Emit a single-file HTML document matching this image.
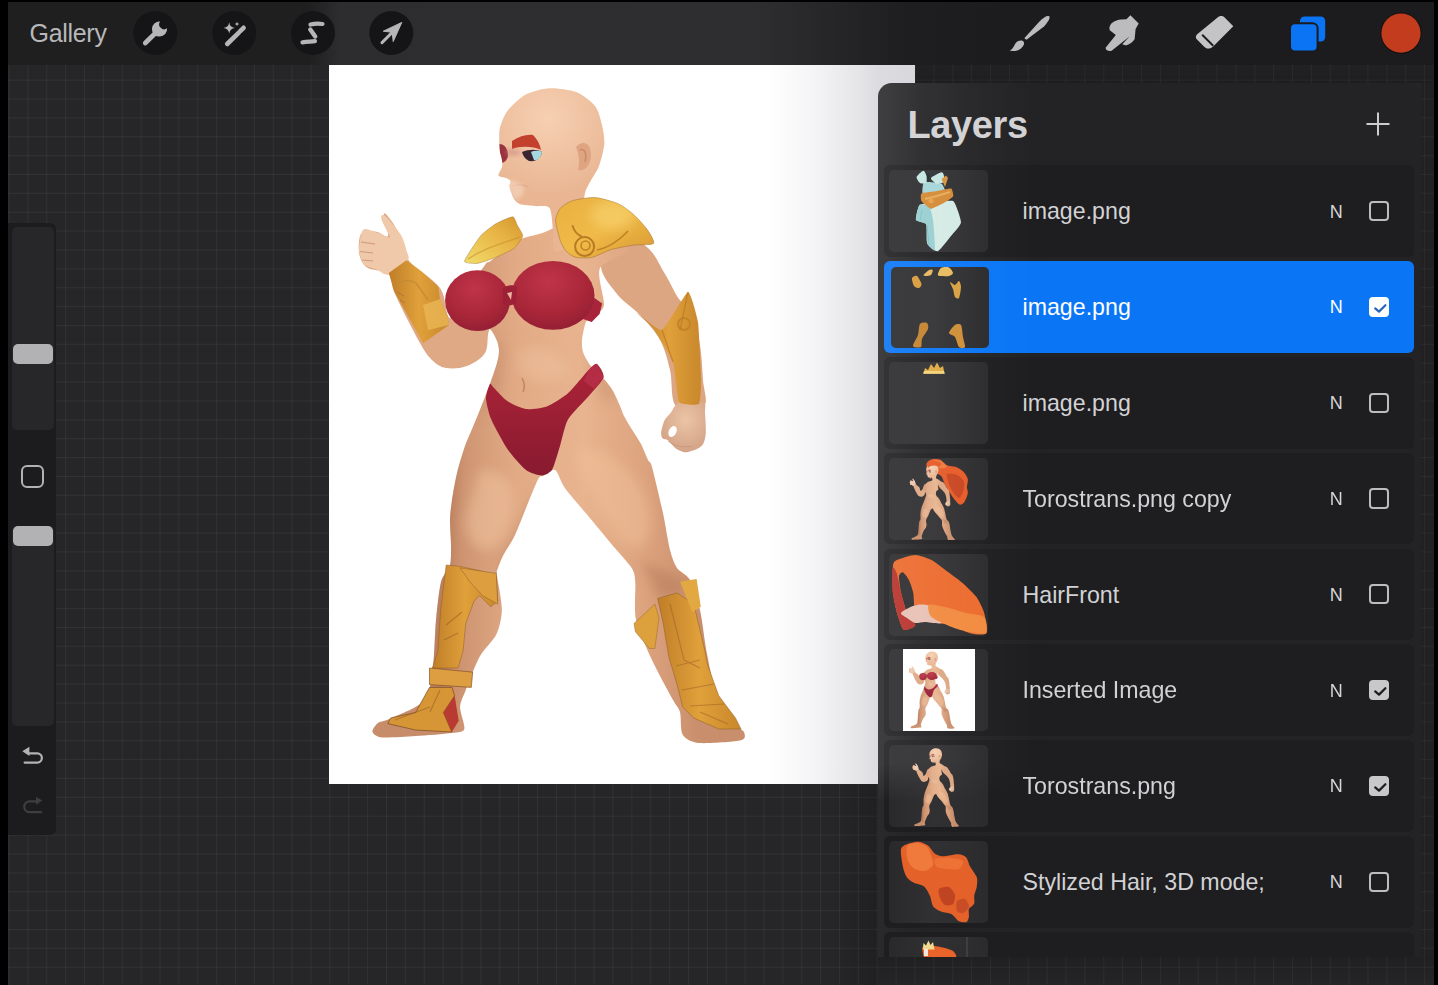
<!DOCTYPE html>
<html><head><meta charset="utf-8">
<style>
*{margin:0;padding:0;box-sizing:border-box}
html,body{width:1438px;height:985px;overflow:hidden;background:#000;font-family:"Liberation Sans",sans-serif}
.abs{position:absolute}
#bg{position:absolute;left:8px;top:2px;width:1426px;height:983px;background-color:#262628;
 background-image:linear-gradient(90deg,rgba(255,255,255,0.05) 1px,transparent 1px),linear-gradient(0deg,rgba(255,255,255,0.05) 1px,transparent 1px);
 background-size:18.885px 18.885px;background-position:0.5px 3.1px}
#toolbar{position:absolute;left:8px;top:2px;width:1426px;height:63px;
 background:linear-gradient(90deg,#1f1f1f 0,#1f1f20 300px,#2d2d2f 332px,#2e2e30 745px,#1e1e20 900px,#1c1b1e 1000px,#1c1b1e 100%)}
.tb{position:absolute;color:#b8b8ba;font-size:24px;line-height:24px}
.circ{position:absolute;width:44px;height:44px;border-radius:50%;background:#151517;top:11px}
.circ svg{position:absolute;left:0;top:0}
#canvas{position:absolute;left:329px;top:65px;width:586px;height:719px;overflow:hidden;
 background:linear-gradient(90deg,#fff 0,#fff 440px,#f3f3f5 490px,#e5e5e7 530px,#dcdce0 549px,#d8d8dc 586px)}
#side{position:absolute;left:8px;top:223px;width:48px;height:612px;background:#1c1c1e;border-radius:0 6px 6px 0}
.track{position:absolute;left:4px;width:42px;background:#272729;border-radius:5px}
.thumbk{position:absolute;left:5px;width:40px;height:20px;background:#b2b2b4;border-radius:5px}
#panel{position:absolute;left:878px;top:83px;width:543px;height:874px;border-radius:14px 10px 0 0;overflow:hidden;
 background:linear-gradient(90deg,#2a2a2c 0,#242426 40px,#232325 150px,#232325 100%)}
.row{position:absolute;left:6px;width:530px;height:91.6px;background:#1e1d20;border-radius:6px;overflow:hidden}
.row.sel{background:#0a76f6}
.th{position:absolute;left:5.3px;top:5px;width:99px;height:82px;border-radius:5px;overflow:hidden;
 background:linear-gradient(90deg,#29292b,#313133 45%,#2b2b2d)}
.th svg{position:absolute;left:0;top:0}
.row.sel .th{left:7px;top:6px;width:97.5px;height:81px}
.lt{position:absolute;left:138.5px;top:35px;font-size:23.2px;line-height:23px;color:#d2d2d4;white-space:nowrap}
.row.sel .lt{color:#fff}
.n{position:absolute;left:445.8px;top:37.2px;font-size:18px;line-height:18px;color:#d6d6d8}
.row.sel .n{color:#fff}
.cb{position:absolute;left:485px;top:35.5px;width:20.3px;height:20.3px;border:2.2px solid #bdbdbf;border-radius:4px}
.cb.on{background:#c8c8ca;border-color:#c8c8ca}
.cb.sel{background:#fff;border-color:#fff}
.cb svg{position:absolute;left:-2.2px;top:-2.2px}
</style></head><body>
<svg width="0" height="0" style="position:absolute"><defs>
<linearGradient id="gSkin" gradientUnits="userSpaceOnUse" x1="440" y1="0" x2="700" y2="0"><stop offset="0" stop-color="#c78c6a"/><stop offset="0.3" stop-color="#e2ab86"/><stop offset="0.55" stop-color="#e8b48f"/><stop offset="0.8" stop-color="#dca27e"/><stop offset="1" stop-color="#c98f6c"/></linearGradient>
<linearGradient id="gLegL" gradientUnits="userSpaceOnUse" x1="445" y1="0" x2="520" y2="0"><stop offset="0" stop-color="#c4896a"/><stop offset="0.5" stop-color="#e3ad88"/><stop offset="1" stop-color="#d39a77"/></linearGradient>
<radialGradient id="gHead" gradientUnits="userSpaceOnUse" cx="548" cy="118" r="80"><stop offset="0" stop-color="#f6d0b2"/><stop offset="1" stop-color="#e9b592"/></radialGradient>
<linearGradient id="gGold" x1="0" y1="0" x2="1" y2="1"><stop offset="0" stop-color="#e8b040"/><stop offset="0.5" stop-color="#f0ba48"/><stop offset="1" stop-color="#d89830"/></linearGradient>
<linearGradient id="gGoldS" x1="0" y1="1" x2="1" y2="0"><stop offset="0" stop-color="#f0dc6a"/><stop offset="0.6" stop-color="#e8b445"/><stop offset="1" stop-color="#d4962e"/></linearGradient>
<linearGradient id="gGoldD" x1="0" y1="0" x2="1" y2="0"><stop offset="0" stop-color="#bf7e28"/><stop offset="0.5" stop-color="#e0a03a"/><stop offset="1" stop-color="#c8882c"/></linearGradient>
<linearGradient id="gRedB" x1="0" y1="0" x2="0" y2="1"><stop offset="0" stop-color="#ac2438"/><stop offset="1" stop-color="#881a30"/></linearGradient>
<radialGradient id="gBoob" cx="0.45" cy="0.3" r="0.8"><stop offset="0" stop-color="#c03448"/><stop offset="0.6" stop-color="#a82638"/><stop offset="1" stop-color="#8c1c32"/></radialGradient>
<radialGradient id="gFist" cx="0.55" cy="0.35" r="0.75"><stop offset="0" stop-color="#ecc4a6"/><stop offset="1" stop-color="#cf9e82"/></radialGradient>
<clipPath id="headClip"><path d="M549.5 88.2 C556.2 87.9 569.9 89.6 576.0 92.0 C582.1 94.4 591.5 101.6 595.0 106.0 C598.5 110.4 600.8 119.9 602.0 125.0 C603.2 130.1 604.7 138.5 604.3 144.0 C603.9 149.5 600.9 160.9 599.0 166.0 C597.1 171.1 591.9 178.4 590.0 182.0 C588.1 185.6 585.8 189.5 585.0 193.0 C584.2 196.5 583.6 202.8 584.0 208.0 C584.4 213.2 591.7 226.1 588.0 232.0 C584.3 237.9 560.7 252.3 556.0 252.0 C551.3 251.7 553.9 235.9 553.0 230.0 C552.1 224.1 551.9 211.2 549.5 208.0 C547.1 204.8 538.7 206.6 534.8 206.1 C530.9 205.6 523.0 205.2 520.2 204.3 C517.4 203.4 515.2 200.6 514.0 199.0 C512.8 197.4 511.6 193.7 511.0 192.0 C510.4 190.3 509.6 187.5 509.5 186.0 C509.4 184.5 511.0 182.1 510.5 181.0 C510.0 179.9 507.6 178.7 506.0 178.0 C504.4 177.3 499.0 177.0 498.5 175.5 C498.0 174.0 501.5 169.1 502.0 167.0 C502.5 164.9 502.3 162.3 502.0 160.0 C501.7 157.7 499.9 152.7 499.5 150.0 C499.1 147.3 499.1 143.0 499.2 140.0 C499.3 137.0 498.9 131.4 500.0 127.5 C501.1 123.6 504.0 115.4 507.4 111.0 C510.8 106.6 520.1 97.6 525.7 94.6 C531.3 91.6 542.8 88.5 549.5 88.2Z"/></clipPath>
<clipPath id="paulClip"><path d="M555.6 220.6 C555.6 216.9 558.2 210.7 560.2 208.4 C562.2 206.1 568.3 202.0 572.4 200.7 C576.5 199.4 589.9 197.2 595.3 197.6 C600.7 198.0 613.8 201.8 618.3 203.8 C622.8 205.8 630.2 211.5 633.6 214.5 C637.0 217.5 645.1 226.4 647.4 229.8 C649.7 233.2 655.1 241.7 653.5 243.5 C651.9 245.3 638.6 244.4 633.6 245.1 C628.6 245.8 615.4 248.3 610.6 249.7 C605.8 251.1 596.4 256.4 592.3 257.3 C588.2 258.2 578.5 258.0 575.5 257.3 C572.5 256.6 568.1 253.2 566.3 251.2 C564.5 249.2 561.4 244.1 560.2 240.5 C559.0 236.9 555.6 224.3 555.6 220.6Z"/></clipPath>
<clipPath id="torsoClip"><path d="M545.0 232.0 C536.5 235.3 524.3 236.9 518.0 240.0 C511.7 243.1 503.1 250.7 498.0 255.0 C492.9 259.3 483.1 266.0 480.0 272.0 C476.9 278.0 475.0 293.6 475.0 300.0 C475.0 306.4 477.9 316.0 480.0 320.0 C482.1 324.0 488.7 327.2 491.0 330.0 C493.3 332.8 495.9 338.2 497.0 341.0 C498.1 343.8 499.0 348.1 499.0 351.0 C499.0 353.9 498.1 359.0 497.0 363.0 C495.9 367.0 492.6 376.5 491.0 381.0 C489.4 385.5 487.1 391.5 485.0 397.0 C482.9 402.5 477.7 415.5 475.0 422.0 C472.3 428.5 467.4 439.2 465.0 446.0 C462.6 452.8 458.7 465.8 457.0 473.0 C455.3 480.2 452.9 493.7 452.0 500.0 C451.1 506.3 450.1 514.0 450.0 520.0 C449.9 526.0 451.0 539.0 451.0 545.0 C451.0 551.0 451.3 560.1 450.0 565.0 C448.7 569.9 442.9 574.7 441.0 582.0 C439.1 589.3 437.1 608.8 436.0 620.0 C434.9 631.2 434.5 655.3 433.0 666.0 C431.5 676.7 430.5 693.1 425.0 700.0 C419.5 706.9 398.3 714.9 392.0 718.0 C385.7 721.1 380.6 721.1 378.0 723.0 C375.4 724.9 371.9 730.1 372.5 732.0 C373.1 733.9 376.6 737.0 382.3 737.5 C388.0 738.0 406.3 736.7 415.6 736.1 C424.9 735.5 445.3 733.9 451.8 733.0 C458.3 732.1 463.2 732.5 464.3 729.0 C465.4 725.5 459.9 712.1 460.1 706.9 C460.3 701.7 463.1 696.9 465.7 690.2 C468.3 683.5 475.5 664.2 479.6 656.8 C483.7 649.4 493.3 640.9 496.3 634.6 C499.3 628.3 501.8 617.4 501.9 609.5 C502.0 601.6 497.5 580.5 497.0 575.0 C496.5 569.5 497.1 570.7 498.0 568.0 C498.9 565.3 501.1 559.4 503.4 555.0 C505.7 550.6 511.7 542.1 515.0 535.0 C518.3 527.9 525.4 509.2 528.5 501.7 C531.6 494.2 536.5 481.8 538.5 478.4 C540.5 475.0 541.3 477.0 543.5 475.9 C545.7 474.8 552.3 468.3 555.2 470.0 C558.1 471.7 560.5 481.9 565.2 488.4 C569.9 494.9 583.6 510.4 590.3 518.4 C597.0 526.4 609.7 541.8 615.3 548.5 C620.9 555.2 629.3 563.9 632.0 568.5 C634.7 573.1 634.8 576.1 635.3 583.0 C635.8 589.9 633.8 609.7 636.0 620.0 C638.2 630.3 647.1 649.3 652.0 660.0 C656.9 670.7 669.3 693.1 673.0 700.0 C676.7 706.9 678.7 707.4 680.0 712.0 C681.3 716.6 680.1 730.6 682.7 734.7 C685.3 738.8 691.6 742.3 699.4 743.0 C707.2 743.7 735.1 741.8 741.0 740.3 C746.9 738.8 744.6 734.0 743.9 732.0 C743.2 730.0 739.5 729.3 736.0 725.0 C732.5 720.7 721.9 709.5 718.0 700.0 C714.1 690.5 709.4 666.0 707.0 654.0 C704.6 642.0 702.3 619.9 700.0 610.0 C697.7 600.1 693.1 585.6 690.0 580.0 C686.9 574.4 679.7 572.0 677.0 568.0 C674.3 564.0 671.9 557.3 670.0 550.0 C668.1 542.7 665.4 524.1 663.0 513.0 C660.6 501.9 654.0 474.1 652.0 467.0 C650.0 459.9 649.5 463.1 648.0 460.0 C646.5 456.9 643.3 448.3 641.0 444.0 C638.7 439.7 633.3 431.7 631.0 428.0 C628.7 424.3 625.5 418.9 624.0 416.0 C622.5 413.1 621.5 409.3 620.0 406.0 C618.5 402.7 615.1 394.6 613.0 391.0 C610.9 387.4 606.5 381.8 604.0 379.0 C601.5 376.2 596.1 372.3 594.0 370.0 C591.9 367.7 589.5 364.4 588.0 362.0 C586.5 359.6 583.8 354.9 583.0 352.0 C582.2 349.1 581.6 344.0 582.0 340.0 C582.4 336.0 584.4 325.2 586.0 322.0 C587.6 318.8 591.6 318.3 594.0 316.0 C596.4 313.7 603.2 311.4 604.0 305.0 C604.8 298.6 596.5 275.6 600.0 268.0 C603.5 260.4 630.0 254.4 630.0 248.0 C630.0 241.6 606.4 224.4 600.0 220.0 C593.6 215.6 589.3 213.4 582.0 215.0 C574.7 216.6 553.5 228.7 545.0 232.0Z"/></clipPath>
<filter id="blur2" x="-30%" y="-30%" width="160%" height="160%"><feGaussianBlur stdDeviation="2"/></filter>
<filter id="blur6" x="-20%" y="-20%" width="140%" height="140%"><feGaussianBlur stdDeviation="6"/></filter>
<g id="fBody">
 <path d="M384.0 214.0 C384.3 211.2 387.8 216.3 390.0 219.0 C392.2 221.7 394.5 225.3 397.0 230.0 C399.5 234.7 402.8 241.7 405.0 247.0 C407.2 252.3 404.2 255.2 410.0 262.0 C415.8 268.8 433.3 278.7 440.0 288.0 C446.7 297.3 445.0 316.0 450.0 318.0 C455.0 320.0 463.7 309.3 470.0 300.0 C476.3 290.7 483.0 262.0 488.0 262.0 C493.0 262.0 499.8 288.7 500.0 300.0 C500.2 311.3 491.5 321.2 489.0 330.0 C486.5 338.8 488.7 347.0 485.0 353.0 C481.3 359.0 473.5 363.5 467.0 366.0 C460.5 368.5 451.8 369.0 446.0 368.0 C440.2 367.0 436.3 364.2 432.0 360.0 C427.7 355.8 426.2 354.0 420.0 343.0 C413.8 332.0 400.2 305.5 395.0 294.0 C389.8 282.5 393.5 278.3 389.0 274.0 C384.5 269.7 372.8 270.8 368.0 268.0 C363.2 265.2 361.5 261.3 360.0 257.0 C358.5 252.7 358.5 246.2 359.0 242.0 C359.5 237.8 360.0 233.7 363.0 232.0 C366.0 230.3 372.8 231.3 377.0 232.0 C381.2 232.7 386.8 239.0 388.0 236.0 C389.2 233.0 383.7 216.8 384.0 214.0Z" fill="#dfa985"/>
 <path d="M384.3 215.2 C386.5 216.5 391.3 222.3 394.2 225.9 C397.1 229.5 399.8 232.5 401.8 236.6 C403.8 240.7 405.4 246.2 406.4 250.3 C407.3 254.4 410.3 256.9 407.5 261.0 C404.7 265.1 394.9 273.2 389.6 274.6 C384.3 276.0 380.0 270.8 375.9 269.3 C371.8 267.8 367.5 266.9 365.2 265.5 C362.9 264.1 363.2 263.3 362.2 261.0 C361.2 258.7 359.5 255.1 359.1 251.8 C358.7 248.5 359.5 244.2 359.9 241.1 C360.3 238.0 360.5 235.5 361.4 233.5 C362.3 231.5 362.5 229.0 365.2 228.9 C367.9 228.8 373.3 231.4 377.4 232.8 C381.5 234.2 388.1 237.7 389.6 237.3 C391.1 236.9 388.0 233.7 386.6 230.5 C385.2 227.3 381.6 220.9 381.2 218.3 C380.8 215.8 382.1 213.9 384.3 215.2Z" fill="#f0c8aa"/>
 <path d="M361 242 L375 244 M360 251.5 L373 253 M362.5 260 L373 261" stroke="#d09a7c" stroke-width="1.2" fill="none"/>
 <path d="M622.0 238.0 C629.8 235.2 640.8 242.0 648.0 248.0 C655.2 254.0 659.8 265.5 665.0 274.0 C670.2 282.5 674.5 292.7 679.0 299.0 C683.5 305.3 688.5 304.3 692.0 312.0 C695.5 319.7 698.2 333.7 700.0 345.0 C701.8 356.3 702.3 369.8 703.0 380.0 C703.7 390.2 708.5 401.7 704.0 406.0 C699.5 410.3 681.7 412.0 676.0 406.0 C670.3 400.0 672.7 381.0 670.0 370.0 C667.3 359.0 665.0 349.2 660.0 340.0 C655.0 330.8 647.2 322.7 640.0 315.0 C632.8 307.3 623.5 302.3 617.0 294.0 C610.5 285.7 600.2 274.3 601.0 265.0 C601.8 255.7 614.2 240.8 622.0 238.0Z" fill="#dda682"/>
 <path d="M679.0 402.7 C683.3 401.4 699.9 401.4 703.4 402.7 C706.9 404.0 704.7 408.5 705.0 412.5 C705.3 416.5 706.0 428.7 705.8 432.8 C705.6 436.9 704.6 441.2 703.4 443.4 C702.2 445.6 699.3 447.8 696.9 449.0 C694.5 450.2 688.2 452.3 685.5 452.3 C682.8 452.3 678.5 450.2 676.6 449.0 C674.7 447.8 672.1 444.6 670.9 443.4 C669.7 442.2 668.7 440.7 667.6 440.0 C666.5 439.3 663.6 439.5 662.7 438.5 C661.8 437.5 660.9 435.2 661.1 432.8 C661.3 430.4 663.1 423.3 664.4 420.6 C665.7 417.9 669.0 414.9 670.9 412.5 C672.8 410.1 674.7 404.0 679.0 402.7Z" fill="url(#gFist)"/>
 <ellipse cx="672.6" cy="431.5" rx="3.8" ry="5.8" transform="rotate(25 672.6 431.5)" fill="#fff"/>
 <path d="M668 441 C674 446 684 448 692 446" stroke="#c09078" stroke-width="1" fill="none" opacity="0.6"/>
 <path d="M545.0 232.0 C536.5 235.3 524.3 236.9 518.0 240.0 C511.7 243.1 503.1 250.7 498.0 255.0 C492.9 259.3 483.1 266.0 480.0 272.0 C476.9 278.0 475.0 293.6 475.0 300.0 C475.0 306.4 477.9 316.0 480.0 320.0 C482.1 324.0 488.7 327.2 491.0 330.0 C493.3 332.8 495.9 338.2 497.0 341.0 C498.1 343.8 499.0 348.1 499.0 351.0 C499.0 353.9 498.1 359.0 497.0 363.0 C495.9 367.0 492.6 376.5 491.0 381.0 C489.4 385.5 487.1 391.5 485.0 397.0 C482.9 402.5 477.7 415.5 475.0 422.0 C472.3 428.5 467.4 439.2 465.0 446.0 C462.6 452.8 458.7 465.8 457.0 473.0 C455.3 480.2 452.9 493.7 452.0 500.0 C451.1 506.3 450.1 514.0 450.0 520.0 C449.9 526.0 451.0 539.0 451.0 545.0 C451.0 551.0 451.3 560.1 450.0 565.0 C448.7 569.9 442.9 574.7 441.0 582.0 C439.1 589.3 437.1 608.8 436.0 620.0 C434.9 631.2 434.5 655.3 433.0 666.0 C431.5 676.7 430.5 693.1 425.0 700.0 C419.5 706.9 398.3 714.9 392.0 718.0 C385.7 721.1 380.6 721.1 378.0 723.0 C375.4 724.9 371.9 730.1 372.5 732.0 C373.1 733.9 376.6 737.0 382.3 737.5 C388.0 738.0 406.3 736.7 415.6 736.1 C424.9 735.5 445.3 733.9 451.8 733.0 C458.3 732.1 463.2 732.5 464.3 729.0 C465.4 725.5 459.9 712.1 460.1 706.9 C460.3 701.7 463.1 696.9 465.7 690.2 C468.3 683.5 475.5 664.2 479.6 656.8 C483.7 649.4 493.3 640.9 496.3 634.6 C499.3 628.3 501.8 617.4 501.9 609.5 C502.0 601.6 497.5 580.5 497.0 575.0 C496.5 569.5 497.1 570.7 498.0 568.0 C498.9 565.3 501.1 559.4 503.4 555.0 C505.7 550.6 511.7 542.1 515.0 535.0 C518.3 527.9 525.4 509.2 528.5 501.7 C531.6 494.2 536.5 481.8 538.5 478.4 C540.5 475.0 541.3 477.0 543.5 475.9 C545.7 474.8 552.3 468.3 555.2 470.0 C558.1 471.7 560.5 481.9 565.2 488.4 C569.9 494.9 583.6 510.4 590.3 518.4 C597.0 526.4 609.7 541.8 615.3 548.5 C620.9 555.2 629.3 563.9 632.0 568.5 C634.7 573.1 634.8 576.1 635.3 583.0 C635.8 589.9 633.8 609.7 636.0 620.0 C638.2 630.3 647.1 649.3 652.0 660.0 C656.9 670.7 669.3 693.1 673.0 700.0 C676.7 706.9 678.7 707.4 680.0 712.0 C681.3 716.6 680.1 730.6 682.7 734.7 C685.3 738.8 691.6 742.3 699.4 743.0 C707.2 743.7 735.1 741.8 741.0 740.3 C746.9 738.8 744.6 734.0 743.9 732.0 C743.2 730.0 739.5 729.3 736.0 725.0 C732.5 720.7 721.9 709.5 718.0 700.0 C714.1 690.5 709.4 666.0 707.0 654.0 C704.6 642.0 702.3 619.9 700.0 610.0 C697.7 600.1 693.1 585.6 690.0 580.0 C686.9 574.4 679.7 572.0 677.0 568.0 C674.3 564.0 671.9 557.3 670.0 550.0 C668.1 542.7 665.4 524.1 663.0 513.0 C660.6 501.9 654.0 474.1 652.0 467.0 C650.0 459.9 649.5 463.1 648.0 460.0 C646.5 456.9 643.3 448.3 641.0 444.0 C638.7 439.7 633.3 431.7 631.0 428.0 C628.7 424.3 625.5 418.9 624.0 416.0 C622.5 413.1 621.5 409.3 620.0 406.0 C618.5 402.7 615.1 394.6 613.0 391.0 C610.9 387.4 606.5 381.8 604.0 379.0 C601.5 376.2 596.1 372.3 594.0 370.0 C591.9 367.7 589.5 364.4 588.0 362.0 C586.5 359.6 583.8 354.9 583.0 352.0 C582.2 349.1 581.6 344.0 582.0 340.0 C582.4 336.0 584.4 325.2 586.0 322.0 C587.6 318.8 591.6 318.3 594.0 316.0 C596.4 313.7 603.2 311.4 604.0 305.0 C604.8 298.6 596.5 275.6 600.0 268.0 C603.5 260.4 630.0 254.4 630.0 248.0 C630.0 241.6 606.4 224.4 600.0 220.0 C593.6 215.6 589.3 213.4 582.0 215.0 C574.7 216.6 553.5 228.7 545.0 232.0Z" fill="url(#gSkin)"/>
 <g clip-path="url(#torsoClip)" filter="url(#blur6)">
  <path d="M440 450 L458 450 L452 560 L446 700 L430 700Z" fill="#a86a4a" opacity="0.45"/>
  <path d="M500 560 L520 520 L545 476 L525 540 L505 600Z" fill="#b07656" opacity="0.35"/>
  <path d="M480 470 C500 470 520 480 510 520 C500 560 470 560 465 520Z" fill="#f2c6a2" opacity="0.5"/>
  <path d="M575 450 C600 440 640 470 650 510 C655 540 640 560 620 540 C600 510 580 480 575 450Z" fill="#f0c09a" opacity="0.5"/>
  <path d="M640 560 C660 570 680 575 690 590 L660 600Z" fill="#a86e50" opacity="0.4"/>
  <path d="M490 340 L505 345 L500 390 L480 420Z" fill="#b98060" opacity="0.35"/>
  <path d="M585 340 L600 350 L620 400 L600 400Z" fill="#b98060" opacity="0.3"/>
  <path d="M520 350 C540 345 560 350 570 370 C560 385 530 385 520 370Z" fill="#f0c4a2" opacity="0.45"/>
 </g>
 <path d="M522 378 C524 382 525 388 523 392" stroke="#b07a5c" stroke-width="1.6" fill="none" opacity="0.7"/>
 <path d="M549.5 88.2 C556.2 87.9 569.9 89.6 576.0 92.0 C582.1 94.4 591.5 101.6 595.0 106.0 C598.5 110.4 600.8 119.9 602.0 125.0 C603.2 130.1 604.7 138.5 604.3 144.0 C603.9 149.5 600.9 160.9 599.0 166.0 C597.1 171.1 591.9 178.4 590.0 182.0 C588.1 185.6 585.8 189.5 585.0 193.0 C584.2 196.5 583.6 202.8 584.0 208.0 C584.4 213.2 591.7 226.1 588.0 232.0 C584.3 237.9 560.7 252.3 556.0 252.0 C551.3 251.7 553.9 235.9 553.0 230.0 C552.1 224.1 551.9 211.2 549.5 208.0 C547.1 204.8 538.7 206.6 534.8 206.1 C530.9 205.6 523.0 205.2 520.2 204.3 C517.4 203.4 515.2 200.6 514.0 199.0 C512.8 197.4 511.6 193.7 511.0 192.0 C510.4 190.3 509.6 187.5 509.5 186.0 C509.4 184.5 511.0 182.1 510.5 181.0 C510.0 179.9 507.6 178.7 506.0 178.0 C504.4 177.3 499.0 177.0 498.5 175.5 C498.0 174.0 501.5 169.1 502.0 167.0 C502.5 164.9 502.3 162.3 502.0 160.0 C501.7 157.7 499.9 152.7 499.5 150.0 C499.1 147.3 499.1 143.0 499.2 140.0 C499.3 137.0 498.9 131.4 500.0 127.5 C501.1 123.6 504.0 115.4 507.4 111.0 C510.8 106.6 520.1 97.6 525.7 94.6 C531.3 91.6 542.8 88.5 549.5 88.2Z" fill="url(#gHead)"/>
 <g clip-path="url(#headClip)">
 <path d="M576 147 C583 139 592 143 591 157 C590 166 584 172 578 170 C580 162 579 154 576 147Z" fill="#dfa482"/>
 <path d="M580 150 C585 148 587 154 585 162" stroke="#c88a6a" stroke-width="1.5" fill="none"/>
 <path d="M512 141 C520 136 527 134 533 135 C537 139 540 144 541 150 C533 146 520 146 512 149Z" fill="#c4402e"/>
 <path d="M499.5 144 C504 144 508 148 508 156 C507 160 505 162 502 163 C500 156 499.5 150 499.5 144Z" fill="#8e2434" opacity="0.9"/>
 <path d="M506 150 C512 148 518 149 522 153 C518 156 512 156 506 155Z" fill="#c8807a" opacity="0.5" filter="url(#blur2)"/>
 <path d="M522 152 C529 149 537 149 542 152 C541 158 536 162 529 161 C525 159 523 156 522 152Z" fill="#3a2630"/>
 <path d="M531 152 C536 150 540 151 542 152 C541 157 538 161 534 160Z" fill="#a6d9df"/>
 <path d="M512 186 C518 184 524 185 528 187" stroke="#d4a088" stroke-width="1.2" fill="none" opacity="0.7"/>
 <path d="M505 180 C512 179 520 182 524 188 C524 196 520 200 513 199 L507 186Z" fill="#f8dcc8" opacity="0.55" filter="url(#blur2)"/>
 </g>
</g>
<g id="fBikini">
 <path d="M490.0 384.0 C489.1 385.2 485.8 394.3 486.0 398.5 C486.2 402.7 488.8 413.7 491.3 419.6 C493.8 425.5 503.2 442.8 507.2 448.7 C511.2 454.6 521.7 466.7 525.7 469.8 C529.7 472.9 538.4 475.5 541.5 475.5 C544.6 475.5 549.8 473.2 552.0 469.8 C554.2 466.4 558.1 451.9 560.0 446.0 C561.9 440.1 564.6 425.5 568.0 419.6 C571.4 413.7 584.8 400.7 589.0 395.8 C593.2 390.9 602.7 381.0 603.6 377.3 C604.5 373.6 598.7 364.9 597.0 364.0 C595.3 363.1 592.4 366.0 589.0 369.4 C585.6 372.8 572.9 388.9 568.0 393.2 C563.1 397.5 551.7 404.6 546.8 406.4 C541.9 408.2 530.3 409.6 525.7 409.0 C521.1 408.4 510.9 403.4 507.2 401.0 C503.5 398.6 496.0 390.0 494.0 388.0 C492.0 386.0 490.9 382.8 490.0 384.0Z" fill="url(#gRedB)"/>
 <path d="M589.0 369.4 L597.0 364.0 L603.6 377.3 L594.0 389.0 L584.0 381.0Z" fill="#b83048" opacity="0.8"/>
 <path d="M586.0 292.0 L602.2 303.4 L599.6 314.0 L591.7 321.9 L580.0 318.0Z" fill="#a8243a"/>
 <ellipse cx="553" cy="295.4" rx="41.5" ry="34.4" fill="url(#gBoob)"/>
 <ellipse cx="477.5" cy="300.7" rx="32.4" ry="30.4" fill="url(#gBoob)"/>
 <path d="M503 288 C507 285 513 284 517 287 L516 303 C512 306 507 306 503 304Z" fill="#9e2036"/>
 <path d="M507 293 L512 292 L511 300 Z" fill="#e8b8a0"/>
</g>
<g id="fArmor">
 <path d="M464.5 261.1 C464.8 258.8 478.0 239.0 480.6 235.9 C483.2 232.8 493.2 225.3 495.9 223.7 C498.6 222.1 510.9 216.7 512.7 216.8 C514.5 216.9 516.5 223.6 517.3 225.2 C518.1 226.8 523.0 234.0 522.7 235.9 C522.5 237.8 516.5 246.3 514.3 248.1 C512.1 249.9 499.0 256.0 495.9 257.3 C492.8 258.6 480.1 263.1 477.5 263.4 C474.9 263.7 464.2 263.4 464.5 261.1Z" fill="url(#gGoldS)" stroke="#9a6a20" stroke-width="0.8" stroke-opacity="0.5"/>
 <path d="M468 259 C485 248 500 244 520 237" stroke="#c89030" stroke-width="1.4" fill="none" opacity="0.6"/>
 <path d="M555.6 220.6 C555.6 216.9 558.2 210.7 560.2 208.4 C562.2 206.1 568.3 202.0 572.4 200.7 C576.5 199.4 589.9 197.2 595.3 197.6 C600.7 198.0 613.8 201.8 618.3 203.8 C622.8 205.8 630.2 211.5 633.6 214.5 C637.0 217.5 645.1 226.4 647.4 229.8 C649.7 233.2 655.1 241.7 653.5 243.5 C651.9 245.3 638.6 244.4 633.6 245.1 C628.6 245.8 615.4 248.3 610.6 249.7 C605.8 251.1 596.4 256.4 592.3 257.3 C588.2 258.2 578.5 258.0 575.5 257.3 C572.5 256.6 568.1 253.2 566.3 251.2 C564.5 249.2 561.4 244.1 560.2 240.5 C559.0 236.9 555.6 224.3 555.6 220.6Z" fill="url(#gGold)" stroke="#8a5a20" stroke-width="0.8" stroke-opacity="0.5"/>
 <g clip-path="url(#paulClip)"><ellipse cx="612" cy="215" rx="22" ry="14" fill="#f8d878" opacity="0.55" filter="url(#blur6)"/></g>
 <circle cx="584.6" cy="246.6" r="9.5" fill="none" stroke="#b87a22" stroke-width="2"/>
 <circle cx="585.5" cy="245.5" r="4.5" fill="none" stroke="#c08428" stroke-width="1.6"/>
 <path d="M572.4 225.2 C574 231 578 235 582 236.5" stroke="#b87a22" stroke-width="1.8" fill="none"/>
 <path d="M597 250 C608 248 620 240 628 231" stroke="#c08428" stroke-width="1.6" fill="none"/>
 <path d="M388.8 273.1 L406.4 260.2 L421.6 271.6 L438.4 286.8 L439.9 299.0 L447.5 315.8 L449.0 324.9 L423.1 343.2 L407.9 315.8 L394.2 291.4Z" fill="url(#gGoldD)"/>
 <path d="M395 285 C402 280 410 279 416 283 L428 300" stroke="#c08a34" stroke-width="1.4" fill="none" opacity="0.8"/>
 <path d="M423.0 305.0 L440.0 299.0 L447.5 315.8 L449.0 324.9 L428.0 330.0Z" fill="#eab656" opacity="0.8"/>
 <path d="M397 292 L404 296 M400 300 L405 303" stroke="#9a6a40" stroke-width="1" opacity="0.6"/>
 <path d="M637.0 313.0 C637.6 313.1 658.6 331.4 662.0 330.0 C665.4 328.6 685.6 292.5 688.0 292.0 C690.4 291.5 697.1 316.2 698.0 322.0 C698.9 327.8 700.9 373.5 701.0 379.0 C701.1 384.5 700.5 402.5 699.0 404.0 C697.5 405.5 680.7 404.8 679.0 402.0 C677.3 399.2 674.7 366.9 673.0 362.0 C671.3 357.1 655.4 331.3 653.0 328.0 C650.6 324.7 636.4 312.9 637.0 313.0Z" fill="url(#gGoldD)"/>
 <circle cx="684" cy="324" r="6" fill="none" stroke="#c28226" stroke-width="1.8"/>
 <path d="M662 330 L673 362 M688 292 L680 330" stroke="#b87a24" stroke-width="1.3" opacity="0.7"/>
 <path d="M446.2 565.0 L460.0 566.4 L479.6 570.6 L496.3 576.2 L497.7 601.2 L490.7 606.8 L479.6 595.6 L474.0 601.2 L465.7 623.4 L463.0 651.3 L458.0 668.0 L432.3 668.0 L437.9 651.3 L440.7 609.5Z" fill="url(#gGoldD)" stroke="#8a5a24" stroke-width="0.8" stroke-opacity="0.6"/>
 <path d="M460.0 567.8 L496.3 573.4 L497.7 604.0 L482.4 595.6 L470.0 582.0Z" fill="#dc9e3e" stroke="#8a5a24" stroke-width="0.8" stroke-opacity="0.6"/>
 <path d="M429.5 687.4 L452.0 687.4 L454.6 695.8 L443.4 712.5 L451.8 732.0 L415.6 730.0 L387.8 723.6 L390.6 718.0 L415.6 712.5Z" fill="#d69636" stroke="#7a4a20" stroke-width="1" stroke-opacity="0.7"/>
 <path d="M443.4 712.5 L454.6 695.8 L458.7 720.8 L451.8 732.0Z" fill="#b83a30"/>
 <path d="M429.5 668.0 L472.7 672.1 L471.3 687.4 L429.5 684.6Z" fill="#dc9e40" stroke="#7a4a20" stroke-width="0.9" stroke-opacity="0.7"/>
 <path d="M446 625 L462 612 M444 640 L458 633 M395 720 L430 707 M440 690 L430 712" stroke="#9a6226" stroke-width="1.2" fill="none" opacity="0.6"/>
 <path d="M657.6 598.4 L677.1 592.9 L693.8 604.0 L705.0 651.3 L707.7 665.2 L718.8 695.8 L735.5 718.0 L741.0 729.0 L718.8 729.0 L693.8 718.0 L682.7 706.9 L677.1 684.6 L668.8 656.8 L663.2 623.4Z" fill="url(#gGoldD)" stroke="#8a5a24" stroke-width="0.8" stroke-opacity="0.6"/>
 <path d="M680.0 581.7 L696.6 579.0 L700.8 606.8 L692.4 612.3Z" fill="#e2a842"/>
 <path d="M634.0 623.4 L654.9 604.0 L659.0 617.9 L654.9 648.5 L649.3 648.5 L635.4 631.8Z" fill="#dca03c" stroke="#8a5a24" stroke-width="0.8" stroke-opacity="0.5"/>
 <path d="M670 604 L684 660 L700 668 M676 666 L700 660 M682 690 L714 684 M690 706 L724 704 M700 712 L728 724" stroke="#9a6226" stroke-width="1.1" fill="none" opacity="0.55"/>
</g>
</defs></svg>
<div id="bg"></div>
<div id="canvas">
<svg width="586" height="719" viewBox="329 65 586 719" style="position:absolute;left:0;top:0"><use href="#fBody"/><use href="#fBikini"/><use href="#fArmor"/></svg>
</div>
<div style="position:absolute;left:915px;top:65px;width:519px;height:18px;background:linear-gradient(180deg,rgba(0,0,0,0.12),rgba(0,0,0,0.22))"></div>
<div style="position:absolute;left:878px;top:957px;width:556px;height:28px;background:linear-gradient(180deg,rgba(0,0,0,0.16),rgba(0,0,0,0.04))"></div>
<div style="position:absolute;left:1421px;top:83px;width:13px;height:874px;background:rgba(0,0,0,0.12)"></div>
<div style="position:absolute;left:830px;top:784px;width:48px;height:201px;background:linear-gradient(90deg,rgba(0,0,0,0),rgba(0,0,0,0.16))"></div>
<div id="toolbar"></div>
<div class="tb" style="left:29.5px;top:20.9px;font-size:25px;line-height:25px;letter-spacing:-0.3px">Gallery</div>
<svg width="1438" height="66" style="position:absolute;left:0;top:0">
<circle cx="155.3" cy="33" r="22" fill="#151517"/>
<circle cx="234.3" cy="33" r="22" fill="#151517"/>
<circle cx="313" cy="33" r="22" fill="#151517"/>
<circle cx="391.3" cy="33" r="22" fill="#151517"/>
<path d="M145.3 43 L155 33.5" stroke="#b6b6b8" stroke-width="4.8" stroke-linecap="round"/>
<path d="M160.04 21.42 A7.6 7.6 0 1 0 167.07 28.30 A5.0 5.0 0 0 1 160.04 21.42Z" fill="#b6b6b8"/>
<path d="M227.2 44 L238.6 32.8" stroke="#b6b6b8" stroke-width="4.6" stroke-linecap="round"/>
<path d="M240.2 31.2 L243.6 27.8" stroke="#b6b6b8" stroke-width="4.6" stroke-linecap="round"/>
<path d="M229.2 22.2 Q229.8 27.3 234.9 27.9 Q229.8 28.5 229.2 33.6 Q228.6 28.5 223.5 27.9 Q228.6 27.3 229.2 22.2Z" fill="#b6b6b8"/>
<path d="M237 21.8 Q237.2 23.8 239.2 24 Q237.2 24.2 237 26.2 Q236.8 24.2 234.8 24 Q236.8 23.8 237 21.8Z" fill="#b6b6b8"/>
<path d="M310.5 24.6 C314 23.6 319 23.4 322.5 24" stroke="#b6b6b8" stroke-width="4.2" stroke-linecap="round" fill="none"/>
<path d="M310.3 29.5 L315.2 36.4" stroke="#b6b6b8" stroke-width="4.4" stroke-linecap="round"/>
<path d="M302.5 42.3 C307 41.8 311 41.6 315 41.2" stroke="#b6b6b8" stroke-width="4.2" stroke-linecap="round" fill="none"/>
<path d="M382 42.6 L392 32.6" stroke="#b6b6b8" stroke-width="3" stroke-linecap="round"/>
<path d="M401.8 22.4 L383.3 31.2 L392.2 32.3 L393.2 41.6Z" fill="#b6b6b8" stroke="#b6b6b8" stroke-width="1" stroke-linejoin="round"/>
<path d="M1048.5 16 C1051 16.5 1049 21 1044 26.5 L1026.5 39.8 L1024.3 38.2 L1039 22 C1043.5 17.5 1046.5 15.6 1048.5 16Z" fill="#bcbcbe"/>
<path d="M1022.5 40.8 C1025 42 1024.5 45.5 1021 48.5 C1017.5 51.3 1012 51.5 1009.5 50.6 C1012 49.8 1013.5 47.5 1014.8 44.5 C1016.3 41.5 1019.5 39.8 1022.5 40.8Z" fill="#bcbcbe"/>
<path d="M1130.4 15.3 L1138.7 23.6 L1135.6 28.9 L1134.6 39.3 C1132 43 1128 45.5 1125.2 45.3 L1122.3 44.2 L1129.5 36.5 L1111.6 50.8 C1109 51.5 1105.5 50.5 1105.6 47.8 L1115.8 35.1 L1109.8 30.2 C1108.8 27 1110.5 24 1112.7 22.6 C1115 20.8 1118 19.8 1121 19.6 L1126.4 19.3Z" fill="#bcbcbe"/>
<path d="M1217.6 17.5 C1219.5 15.6 1222.5 15.4 1224.6 17.5 L1233.3 26.2 L1213.4 46.2 C1210.5 49.1 1207 49.5 1204.2 46.7 L1197 39.5 C1195.3 37.8 1195.5 35.9 1197.2 34.2Z" fill="#c4c4c6"/>
<path d="M1202.2 34.8 L1213.2 45.8" stroke="#1c1b1e" stroke-width="2"/>
<rect x="1300" y="16.5" width="25.2" height="25" rx="4.5" fill="#0a74f5"/>
<rect x="1290" y="23.3" width="27.6" height="28.1" rx="5" fill="#0a74f5" stroke="#1b1b1d" stroke-width="2"/>
<circle cx="1401" cy="33.2" r="20.6" fill="#141010"/>
<circle cx="1401" cy="33.2" r="19.6" fill="#c43c1e"/>
</svg>
<div id="side">
 <div class="track" style="top:4px;height:203px"></div>
 <div class="thumbk" style="top:121px"></div>
 <div style="position:absolute;left:13px;top:242px;width:23px;height:23px;border:2.5px solid #b2b2b4;border-radius:6px"></div>
 <div class="track" style="top:303px;height:200px"></div>
 <div class="thumbk" style="top:303px"></div>
 <svg width="48" height="612" style="position:absolute;left:0;top:0">
  <path d="M21.4 530.4 L29.4 753.4" stroke="none"/>
  <path d="M14.3 528.3 L21.4 523.8 L21.4 532.9Z" fill="#b2b2b4"/>
  <path d="M21 530.4 H29.3 A4.6 4.6 0 0 1 29.3 539.6 H16.6" stroke="#b2b2b4" stroke-width="2.2" fill="none" stroke-linecap="round"/>
  <path d="M34.3 577.5 L28 573.8 L28 581.7Z" fill="#3e3e40"/>
  <path d="M28.5 578.3 H21 A5.5 5.5 0 0 0 21 589.2 H33.1" stroke="#3e3e40" stroke-width="2.2" fill="none" stroke-linecap="round"/>
 </svg>
</div>
<div id="panel">
<div style="position:absolute;left:29.4px;top:22.6px;font-size:38px;line-height:38px;letter-spacing:-0.35px;font-weight:bold;color:#d2d2d4">Layers</div>
<svg style="position:absolute;left:487.5px;top:28.5px" width="24" height="24" viewBox="0 0 24 24"><path d="M12 0.5V23.5M0.5 12H23.5" stroke="#cdcdcf" stroke-width="2"/></svg>
<div class="row" style="top:82.4px"><div class="th"><svg width="99" height="82">
<path d="M30.5 35.0 C29.0 36.4 26.4 48.4 27.0 50.0 C27.6 51.6 36.3 52.3 37.2 54.3 C38.1 56.3 37.2 71.2 38.2 73.5 C39.2 75.8 46.8 81.9 48.8 81.3 C50.8 80.7 60.1 68.4 62.0 66.0 C63.9 63.6 71.8 55.3 72.0 52.4 C72.2 49.5 66.5 32.7 64.2 31.1 C62.0 29.5 47.8 32.7 45.0 33.0 C42.2 33.3 32.0 33.6 30.5 35.0Z" fill="#d4ebe4"/>
<path d="M30.5 35.0 C29.4 36.2 26.4 48.4 27.0 50.0 C27.6 51.6 36.3 52.3 37.2 54.3 C38.1 56.3 37.5 71.4 38.2 73.5 C38.9 75.6 45.5 82.0 46.0 80.0 C46.5 78.0 44.5 53.7 44.0 50.0 C43.5 46.3 41.1 37.2 40.0 36.0 C38.9 34.8 31.6 33.8 30.5 35.0Z" fill="#98cfd2"/>
<path d="M38 55 L40 75 M33 40 L31 50" stroke="#7fb8bc" stroke-width="1" opacity="0.7"/>
<path d="M35.0 11.9 C36.2 11.2 51.2 13.1 52.6 13.8 C54.0 14.5 57.2 21.8 56.0 22.5 C54.8 23.2 35.4 25.1 34.0 24.4 C32.6 23.7 33.8 12.6 35.0 11.9Z" fill="#a6d6d8"/>
<path d="M37 4 L40.5 4 L40 12 L38 12Z" fill="#1a2a2a" opacity="0.8"/>
<path d="M27.6 7.0 C28.0 5.6 33.1 0.9 34.3 0.8 C35.5 0.7 37.2 4.6 37.5 6.0 C37.8 7.4 38.0 12.0 37.2 12.8 C36.4 13.6 32.1 13.7 31.0 13.0 C29.9 12.3 27.2 8.4 27.6 7.0Z" fill="#c6e6e2"/>
<path d="M42.0 8.0 C42.6 6.6 51.1 2.4 52.6 2.2 C54.1 2.0 54.8 4.9 55.0 6.0 C55.2 7.1 55.4 11.0 54.6 11.9 C53.8 12.8 49.3 14.3 47.8 13.8 C46.3 13.3 41.4 9.4 42.0 8.0Z" fill="#c6e6e2"/>
<path d="M52.6 9.0 L57.0 5.5 L59.0 8.0 L56.0 17.0Z" fill="#d8923a"/>
<path d="M32.4 23.5 C33.4 22.8 46.0 21.3 48.0 21.0 C50.0 20.7 61.2 18.2 62.3 18.6 C63.4 19.0 64.6 25.4 64.2 26.3 C63.8 27.2 58.0 31.3 56.5 32.1 C55.0 32.9 43.6 39.0 42.0 38.9 C40.4 38.8 33.0 32.1 32.4 31.1 C31.8 30.1 31.4 24.2 32.4 23.5Z" fill="#d48a34"/>
<path d="M36 29 C45 27 55 24 61 22" stroke="#f2c070" stroke-width="2" opacity="0.6" fill="none"/>
<circle cx="42" cy="31" r="2.5" fill="#e8a848" opacity="0.8"/>
</svg></div><div class="lt">image.png</div><div class="n">N</div><div class="cb"></div></div>
<div class="row sel" style="top:178.2px"><div class="th"><svg width="98" height="81">
<path d="M21.0 11.0 C21.4 9.7 24.7 8.2 26.0 9.0 C27.3 9.8 30.2 15.4 30.5 17.0 C30.8 18.6 29.0 20.7 28.0 21.0 C27.0 21.3 23.9 20.3 23.0 19.0 C22.1 17.7 20.6 12.3 21.0 11.0Z" fill="#d99a3a"/>
<path d="M32.6 8.0 C33.0 7.2 36.8 3.7 38.0 3.0 C39.2 2.3 41.4 2.3 41.7 3.0 C42.0 3.7 40.9 7.2 40.0 8.0 C39.1 8.8 36.0 9.0 35.0 9.0 C34.0 9.0 32.2 8.8 32.6 8.0Z" fill="#e6b85a"/>
<path d="M46.8 8.0 C46.8 6.9 48.5 2.0 50.0 1.0 C51.5 0.0 56.4 -0.2 58.0 0.5 C59.6 1.2 62.0 4.9 62.0 6.0 C62.0 7.1 59.6 8.6 58.0 9.0 C56.4 9.4 51.5 9.1 50.0 9.0 C48.5 8.9 46.8 9.1 46.8 8.0Z" fill="#e8ba5c"/>
<path d="M59.0 15.0 C59.3 14.5 62.8 18.1 64.0 18.0 C65.2 17.9 67.2 13.7 68.0 14.0 C68.8 14.3 70.0 17.7 70.0 20.0 C70.0 22.3 68.8 29.7 68.0 31.0 C67.2 32.3 64.8 31.2 64.0 30.0 C63.2 28.8 62.7 24.0 62.0 22.0 C61.3 20.0 58.7 15.5 59.0 15.0Z" fill="#d9a040"/>
<path d="M22.0 79.0 C21.6 77.4 26.1 70.9 27.0 68.0 C27.9 65.1 27.8 58.6 29.0 57.0 C30.2 55.4 34.9 55.3 36.0 56.0 C37.1 56.7 37.7 59.9 37.0 62.0 C36.3 64.1 31.9 69.6 31.0 72.0 C30.1 74.4 31.2 79.1 30.0 80.0 C28.8 80.9 22.4 80.6 22.0 79.0Z" fill="#c5822e"/>
<path d="M58.0 66.0 C58.0 64.4 62.4 59.1 64.0 58.0 C65.6 56.9 68.9 56.4 70.0 58.0 C71.1 59.6 71.5 67.1 72.0 70.0 C72.5 72.9 74.5 78.7 74.0 80.0 C73.5 81.3 69.3 81.3 68.0 80.0 C66.7 78.7 65.3 71.9 64.0 70.0 C62.7 68.1 58.0 67.6 58.0 66.0Z" fill="#cf8e36"/>
</svg></div><div class="lt">image.png</div><div class="n">N</div><div class="cb sel"><svg width="20" height="20" viewBox="0 0 20 20" style="position:absolute;left:0;top:0"><path d="M4.2 9.4 L8 12.6 L14.4 6.2" stroke="#2a64bd" stroke-width="2.2" fill="none" stroke-linecap="round" stroke-linejoin="round"/></svg></div></div>
<div class="row" style="top:274.0px"><div class="th"><svg width="99" height="83">
<path d="M34.3 11.7 L36 6 L39 8 L42 2 L45 6 L48 0.6 L51 6 L54 4 L55.6 11.7Z" fill="#e0aa40"/>
<path d="M34.3 11.7 L55.6 11.7 L55 9 L35 9Z" fill="#f2d27a"/>
</svg></div><div class="lt">image.png</div><div class="n">N</div><div class="cb"></div></div>
<div class="row" style="top:369.8px"><div class="th"><svg width="99" height="82"><path d="M37.6 5.3 C38.2 3.6 41.3 1.7 43.1 1.2 C44.9 0.7 49.4 0.9 51.3 1.7 C53.2 2.5 55.6 6.2 57.7 7.2 C59.8 8.2 64.7 8.1 66.9 9.0 C69.1 9.9 72.6 12.0 74.2 13.6 C75.8 15.2 78.3 18.8 78.8 20.9 C79.3 23.0 77.9 27.2 77.9 29.1 C77.9 31.0 79.2 33.4 78.8 35.5 C78.4 37.6 76.2 43.1 75.1 44.6 C74.0 46.1 71.8 47.0 70.5 46.5 C69.2 46.0 66.3 42.5 65.1 41.0 C63.9 39.5 62.6 37.4 61.4 35.5 C60.2 33.6 57.1 28.7 55.9 26.4 C54.7 24.1 53.5 19.6 52.3 18.1 C51.1 16.6 48.0 15.4 46.8 15.4 C45.6 15.4 43.8 17.4 43.1 18.1 C42.4 18.8 41.9 21.5 41.3 20.9 C40.7 20.3 39.0 15.7 38.5 13.6 C38.0 11.5 37.0 7.0 37.6 5.3Z" fill="#e65a26"/><path d="M58.0 16.0 C59.1 14.8 65.7 15.9 68.0 17.0 C70.3 18.1 74.2 21.7 75.0 24.0 C75.8 26.3 74.7 31.9 74.0 34.0 C73.3 36.1 71.3 40.0 70.0 40.0 C68.7 40.0 65.3 35.9 64.0 34.0 C62.7 32.1 60.8 28.4 60.0 26.0 C59.2 23.6 56.9 17.2 58.0 16.0Z" fill="#c84420"/><path d="M44.0 3.0 C44.3 2.1 50.1 2.2 52.0 3.0 C53.9 3.8 58.3 8.1 58.0 9.0 C57.7 9.9 51.9 10.8 50.0 10.0 C48.1 9.2 43.7 3.9 44.0 3.0Z" fill="#f07a3a"/><g transform="translate(-21.0 -4.3) scale(0.1166)"><use href="#fBody"/></g><path d="M38 6 C42 2 50 2 53 6 L50 9 C46 7 42 7 39 10Z" fill="#e65a26"/></svg></div><div class="lt">Torostrans.png copy</div><div class="n">N</div><div class="cb"></div></div>
<div class="row" style="top:465.6px"><div class="th"><svg width="99" height="82">
<path d="M3.9 38.6 C3.4 33.2 3.4 16.0 3.9 12.2 C4.4 8.4 5.3 7.4 7.9 6.1 C10.5 4.8 22.2 1.0 26.2 1.0 C30.2 1.0 38.9 4.3 42.4 6.1 C45.9 7.9 53.0 13.6 56.6 16.2 C60.2 18.8 69.3 25.3 72.9 28.4 C76.5 31.5 84.5 39.0 87.1 42.6 C89.7 46.2 94.0 54.6 95.2 58.9 C96.4 63.2 98.9 76.8 97.2 79.2 C95.5 81.6 85.0 80.2 81.0 79.2 C77.0 78.2 66.5 72.2 62.7 71.0 C58.9 69.8 51.6 69.9 48.5 69.0 C45.4 68.1 38.9 64.3 36.3 62.9 C33.7 61.5 27.6 59.6 26.2 56.8 C24.8 54.0 24.9 42.1 24.2 38.6 C23.5 35.1 21.3 28.8 20.1 26.4 C18.9 24.0 15.2 18.8 14.0 18.3 C12.8 17.8 10.2 19.9 10.0 22.3 C9.8 24.7 11.1 34.3 12.0 38.6 C12.9 42.9 16.4 55.1 18.1 58.9 C19.8 62.7 26.0 69.1 26.2 71.0 C26.4 72.9 21.5 74.6 20.1 75.1 C18.7 75.6 15.4 77.0 14.0 75.1 C12.6 73.2 9.2 63.2 8.0 58.9 C6.8 54.6 4.4 44.0 3.9 38.6Z" fill="#ec6a2c"/>
<path d="M3.9 14.0 C4.4 11.8 7.1 17.1 8.0 20.0 C8.9 22.9 10.8 34.1 12.0 38.6 C13.2 43.1 16.4 55.1 18.1 58.9 C19.8 62.7 26.0 69.1 26.2 71.0 C26.4 72.9 21.5 74.6 20.1 75.1 C18.7 75.6 15.4 77.0 14.0 75.1 C12.6 73.2 9.2 63.2 8.0 58.9 C6.8 54.6 4.4 43.8 3.9 38.6 C3.4 33.4 3.4 16.2 3.9 14.0Z" fill="#b8302a"/>
<path d="M12.0 58.9 C12.7 57.5 21.2 53.0 24.0 52.0 C26.8 51.0 32.5 50.1 36.3 50.7 C40.1 51.3 54.7 54.7 56.6 56.8 C58.5 58.9 55.0 67.7 52.6 69.0 C50.2 70.3 39.1 68.0 36.0 68.0 C32.9 68.0 28.3 69.5 26.2 69.0 C24.1 68.5 19.7 65.2 18.0 64.0 C16.3 62.8 11.3 60.3 12.0 58.9Z" fill="#e8c0b4"/>
<path d="M40.0 50.7 C42.1 49.7 55.7 53.0 60.0 54.0 C64.3 55.0 72.9 57.9 77.0 58.9 C81.1 59.9 92.8 60.6 95.2 63.0 C97.6 65.4 99.0 77.5 97.2 79.2 C95.4 81.0 84.0 78.7 80.0 78.0 C76.0 77.3 67.1 74.8 62.7 73.0 C58.3 71.2 45.0 65.6 42.4 63.0 C39.8 60.4 37.9 51.8 40.0 50.7Z" fill="#f28a3e"/>
</svg></div><div class="lt">HairFront</div><div class="n">N</div><div class="cb"></div></div>
<div class="row" style="top:561.4px"><div class="th"><svg width="99" height="82"><rect x="14" y="0" width="72" height="82" fill="#fff"/><g transform="translate(-22.381999999999998 -7.884) scale(0.118)"><use href="#fBody"/><use href="#fBikini"/></g></svg></div><div class="lt">Inserted Image</div><div class="n">N</div><div class="cb on"><svg width="20" height="20" viewBox="0 0 20 20" style="position:absolute;left:0;top:0"><path d="M4.2 9.4 L8 12.6 L14.4 6.2" stroke="#1c1c1e" stroke-width="2.2" fill="none" stroke-linecap="round" stroke-linejoin="round"/></svg></div></div>
<div class="row" style="top:657.2px"><div class="th"><svg width="99" height="82"><g transform="translate(-19.370200000000004 -7.242400000000001) scale(0.1198)"><use href="#fBody"/></g></svg></div><div class="lt">Torostrans.png</div><div class="n">N</div><div class="cb on"><svg width="20" height="20" viewBox="0 0 20 20" style="position:absolute;left:0;top:0"><path d="M4.2 9.4 L8 12.6 L14.4 6.2" stroke="#1c1c1e" stroke-width="2.2" fill="none" stroke-linecap="round" stroke-linejoin="round"/></svg></div></div>
<div class="row" style="top:753.0px"><div class="th"><svg width="99" height="82">
<path d="M11.9 8.6 C12.4 5.6 15.4 4.4 17.8 3.3 C20.2 2.2 26.9 0.5 29.7 0.7 C32.5 0.9 36.9 3.0 39.0 4.6 C41.1 6.2 43.7 11.1 45.6 12.5 C47.5 13.9 50.3 15.1 53.5 15.2 C56.7 15.3 66.1 13.0 69.3 13.2 C72.5 13.4 75.6 14.8 77.2 16.5 C78.8 18.2 79.8 23.1 81.2 25.7 C82.6 28.3 86.9 33.6 87.8 36.3 C88.7 39.0 88.1 43.1 87.8 45.6 C87.5 48.1 85.5 52.5 85.2 54.8 C84.9 57.1 85.9 60.9 85.2 62.7 C84.5 64.5 80.6 66.2 79.9 68.0 C79.2 69.8 80.3 74.1 79.9 75.9 C79.5 77.7 78.6 80.7 77.2 81.2 C75.8 81.7 71.2 81.0 69.3 79.9 C67.4 78.8 65.0 74.5 62.7 73.3 C60.4 72.1 54.7 71.7 52.2 70.6 C49.7 69.5 45.7 67.5 44.2 65.4 C42.7 63.3 42.1 57.4 40.9 54.8 C39.7 52.2 37.2 47.4 35.0 45.6 C32.8 43.8 26.7 42.8 24.4 41.6 C22.1 40.4 19.2 38.4 17.8 36.3 C16.4 34.2 14.7 29.4 13.9 25.7 C13.1 22.0 11.4 11.6 11.9 8.6Z" fill="#e4622a"/>
<path d="M18.0 5.0 C19.3 2.6 26.3 1.9 29.0 2.0 C31.7 2.1 36.3 4.4 38.0 6.0 C39.7 7.6 41.2 11.6 42.0 14.0 C42.8 16.4 44.8 21.9 44.0 24.0 C43.2 26.1 38.4 29.5 36.0 30.0 C33.6 30.5 28.3 29.3 26.0 28.0 C23.7 26.7 20.1 23.1 19.0 20.0 C17.9 16.9 16.7 7.4 18.0 5.0Z" fill="#f07a3c"/>
<path d="M46.0 18.0 C47.9 16.8 58.3 16.7 62.0 17.0 C65.7 17.3 72.9 18.5 74.0 20.0 C75.1 21.5 72.1 26.9 70.0 28.0 C67.9 29.1 60.9 28.3 58.0 28.0 C55.1 27.7 49.6 27.3 48.0 26.0 C46.4 24.7 44.1 19.2 46.0 18.0Z" fill="#ee7236"/>
<path d="M50.0 48.0 C51.2 46.5 57.9 45.2 60.0 46.0 C62.1 46.8 65.5 51.7 66.0 54.0 C66.5 56.3 65.3 61.7 64.0 63.0 C62.7 64.3 57.7 64.8 56.0 64.0 C54.3 63.2 51.8 59.1 51.0 57.0 C50.2 54.9 48.8 49.5 50.0 48.0Z" fill="#bf4522"/>
<path d="M68.0 60.0 C69.1 58.4 74.4 57.2 76.0 58.0 C77.6 58.8 80.3 64.1 80.0 66.0 C79.7 67.9 75.6 71.5 74.0 72.0 C72.4 72.5 68.8 71.6 68.0 70.0 C67.2 68.4 66.9 61.6 68.0 60.0Z" fill="#c84c26"/>
</svg></div><div class="lt">Stylized Hair, 3D mode;</div><div class="n">N</div><div class="cb"></div></div>
<div class="row" style="top:848.8px"><div class="th"><svg width="99" height="21">
<path d="M34.0 10.0 C35.1 9.4 42.8 8.9 45.0 9.0 C47.2 9.1 54.1 10.5 56.0 11.0 C57.9 11.5 62.9 13.3 64.0 14.0 C65.1 14.7 66.8 17.3 67.0 18.0 C67.2 18.7 67.7 20.7 66.0 21.0 C64.3 21.3 53.0 21.0 50.0 21.0 C47.0 21.0 37.6 21.6 36.0 21.0 C34.4 20.4 33.9 16.1 33.7 15.0 C33.5 13.9 32.9 10.6 34.0 10.0Z" fill="#e8642a"/>
<path d="M33.7 12.5 L34.5 6 L37 8.5 L39.5 3.5 L41.5 8 L44 5 L45.5 12.5Z" fill="#f2d88e"/>
<rect x="35" y="12" width="4" height="7" fill="#f4e6dc"/>
<rect x="77.5" y="0" width="1" height="21" fill="#505052"/>
</svg></div></div>
<div style="position:absolute;left:0;top:0;width:170px;height:720px;pointer-events:none;background:linear-gradient(90deg,rgba(255,255,255,0.10),rgba(255,255,255,0.06) 50px,rgba(255,255,255,0.02) 110px,rgba(255,255,255,0) 170px);-webkit-mask-image:linear-gradient(180deg,#000 0,#000 680px,transparent 720px)"></div>
</div>
</body></html>
